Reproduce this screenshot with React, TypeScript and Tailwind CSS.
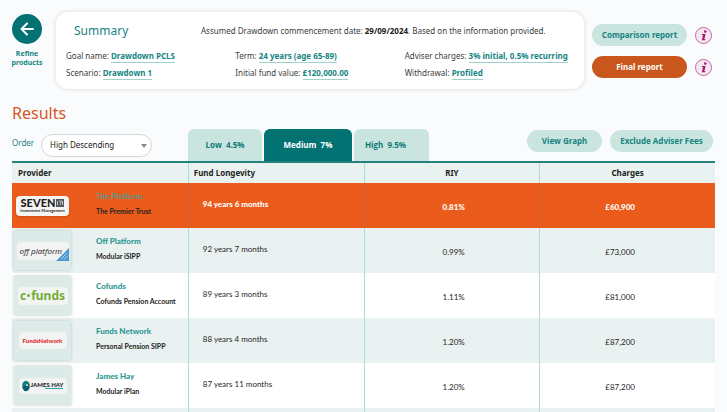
import React from "react";

type Row = {
  provider: string;
  product: string;
  longevity: string;
  riy: string;
  charges: string;
  logo: React.ReactNode;
};

function SevenLogo() {
  return (
    <div className="flex h-5 w-[53px] flex-col items-center justify-center rounded-sm bg-[#f6f4f3] shadow">
      <div className="flex items-center gap-px text-[11px] leading-[10px] font-black text-[#1f2222]">
        SEVEN
        <svg viewBox="0 0 8 8" className="size-2" aria-hidden="true">
          <rect width="8" height="8" fill="#55585a" />
          <path d="M1.5 2v4M3 2h2.500L4 6M6.500 2v4" stroke="#d7d9d9" strokeWidth=".8" fill="none" />
        </svg>
      </div>
      <div className="text-[4px] leading-[5px] font-bold whitespace-nowrap text-[#222]">Investment Management</div>
    </div>
  );
}

function OffPlatformLogo() {
  return (
    <div className="relative flex h-[18px] w-[52px] items-center rounded-sm bg-[#f2f3f3] pl-[3px] font-['Open_Sans',sans-serif] text-[8px] text-[#222] italic">
      <svg viewBox="0 0 13 13" className="absolute right-0 -bottom-px size-[13px]" aria-hidden="true">
        <path d="M13 0v13H0z" fill="#4d96d2" />
        <path d="M5 11l6-6M8 11.500l4-4" stroke="#b8d7f0" strokeWidth="1" />
      </svg>
      <span className="relative whitespace-nowrap">off platform</span>
    </div>
  );
}

function CofundsLogo() {
  return (
    <div className="flex h-[18px] w-[50px] items-center justify-center rounded-sm bg-[#f2f3f3] font-['Noto_Sans',sans-serif] text-[12px] leading-none font-bold text-[#76ab35]">
      c<span className="mx-px size-[3px] rounded-full bg-[#76ab35]" />funds
    </div>
  );
}

function FundsNetworkLogo() {
  return (
    <div className="flex h-[17px] w-12 items-center justify-center rounded-sm bg-[#f2f3f3] text-[6px] font-black text-[#e32a2a]">
      FundsNetwork
    </div>
  );
}

function JamesHayLogo() {
  return (
    <div className="flex h-4 w-12 items-center justify-center gap-px rounded-sm bg-[#f2f4f4]">
      <svg viewBox="0 0 8 12" className="h-3 w-2 shrink-0" aria-hidden="true">
        <ellipse cx="4" cy="6" rx="3.800" ry="5.200" fill="#147c85" />
        <path d="M1 8c3 0 4-3 6-4M2 10c3 0 4-2 5-3" stroke="#0c3f52" strokeWidth="1.200" fill="none" />
        <circle cx="5" cy="5" r="1" fill="#e0eeee" />
      </svg>
      <div className="flex flex-col items-end">
        <span className="text-[6px] leading-[6px] font-black whitespace-nowrap text-[#25292c]">JAMES HAY</span>
        <span className="h-px w-[18px] bg-[#2fa3a5]" />
      </div>
    </div>
  );
}

const rows: Row[] = [
  { provider: "7im Platform", product: "The Premier Trust", longevity: "94 years 6 months", riy: "0.81%", charges: "£60,900", logo: <SevenLogo /> },
  { provider: "Off Platform", product: "Modular iSIPP", longevity: "92 years 7 months", riy: "0.99%", charges: "£73,000", logo: <OffPlatformLogo /> },
  { provider: "Cofunds", product: "Cofunds Pension Account", longevity: "89 years 3 months", riy: "1.11%", charges: "£81,000", logo: <CofundsLogo /> },
  { provider: "Funds Network", product: "Personal Pension SIPP", longevity: "88 years 4 months", riy: "1.20%", charges: "£87,200", logo: <FundsNetworkLogo /> },
  { provider: "James Hay", product: "Modular iPlan", longevity: "87 years 11 months", riy: "1.20%", charges: "£87,200", logo: <JamesHayLogo /> },
];

function Fact({ label, value }: { label: string; value: string }) {
  return (
    <div className="whitespace-nowrap">
      {label}:{" "}
      <a href="#" className="border-b border-[#9ed0cc] pb-px font-bold text-[#168582]">
        {value}
      </a>
    </div>
  );
}

function InfoButton({ label }: { label: string }) {
  return (
    <button
      type="button"
      aria-label={label}
      className="flex size-[17px] items-center justify-center rounded-full border border-[#c266a3] bg-[#f5e6f0]"
    >
      <svg viewBox="0 0 9 13" className="h-[11px] w-2" aria-hidden="true">
        <circle cx="6" cy="1.900" r="1.500" fill="#a3167a" />
        <path d="M2.200 4.800h4.200L4.900 10.800h1.300L5.800 12H2l1.300-6H1.800z" fill="#a3167a" />
      </svg>
    </button>
  );
}

const pill = "h-[22px] rounded-full text-[8px] font-bold whitespace-nowrap";
const divider = "border-l border-solid border-l-[#b0dad7]";
const dividerActive = "border-l border-solid border-l-[#c9653a]";

export default function App() {
  return (
    <div className="h-screen overflow-hidden bg-[#fafbfc] px-3 pt-3 font-['Noto_Sans','Open_Sans',sans-serif] text-[#3a3d40]">
      <header className="flex pr-[3px]">
        <button type="button" className="mt-0.5 flex w-[30px] shrink-0 flex-col items-center text-[7px] leading-[9px] font-bold text-[#168582]">
          <span className="flex size-[30px] shrink-0 items-center justify-center rounded-full bg-[#037272]">
            <svg viewBox="0 0 14 14" className="size-3.5" fill="none" stroke="white" strokeWidth="2" strokeLinecap="round" strokeLinejoin="round" aria-hidden="true">
              <path d="M13 7H1.500M7 1.500L1.500 7 7 12.500" />
            </svg>
          </span>
          <span className="mt-[5px]">Refine products</span>
        </button>

        <section className="ml-3.5 h-[77px] min-w-0 flex-1 rounded-xl bg-white px-2.5 pt-2.5 text-[8px] leading-[17px] shadow-[0_0_4px_#d5d9dc]">
          <div className="flex items-center">
            <h2 className="w-[135px] shrink-0 pl-2 text-[12px] text-[#168582]">Summary</h2>
            <p className="whitespace-nowrap">
              Assumed Drawdown commencement date: <b className="text-[#222]">29/09/2024</b>. Based on the information provided.
            </p>
          </div>
          <div className="mt-2 grid grid-cols-3">
            <Fact label="Goal name" value="Drawdown PCLS" />
            <Fact label="Term" value="24 years (age 65-89)" />
            <Fact label="Adviser charges" value="3% initial, 0.5% recurring" />
            <Fact label="Scenario" value="Drawdown 1" />
            <Fact label="Initial fund value" value="£120,000.00" />
            <Fact label="Withdrawal" value="Profiled" />
          </div>
        </section>

        <div className="mt-3 ml-2 flex shrink-0 flex-col gap-2.5">
          <div className="flex items-center gap-2">
            <button type="button" className={`${pill} w-[95px] bg-[#cae4df] text-[#168582]`}>Comparison report</button>
            <InfoButton label="About the comparison report" />
          </div>
          <div className="flex items-center gap-2">
            <button type="button" className={`${pill} w-[95px] bg-[#c9571d] text-white`}>Final report</button>
            <InfoButton label="About the final report" />
          </div>
        </div>
      </header>

      <h1 className="mt-3 text-[16px] leading-6 text-[#d4581f]">Results</h1>

      <div className="mt-1 flex items-start">
        <div className="flex h-8 w-44 shrink-0 items-center">
          <label htmlFor="order" className="w-[29px] shrink-0 pb-1 text-[8px] text-[#168582]">Order</label>
          <div className="relative flex">
            <select id="order" className="h-[23px] w-[111px] appearance-none rounded-full border border-[#d3d6d8] bg-white pl-2 text-[8px] text-[#222]">
              <option>High Descending</option>
              <option>Low Ascending</option>
            </select>
            <svg viewBox="0 0 6 4" className="pointer-events-none absolute top-[10px] right-[5px] h-1 w-1.5" aria-hidden="true">
              <path d="M0 0h6L3 4z" fill="#888" />
            </svg>
          </div>
        </div>
        <div className="flex gap-0.5 font-['Open_Sans',sans-serif] text-[8px] font-bold whitespace-pre" role="tablist">
          <button type="button" role="tab" aria-selected="false" className="h-8 w-[74px] rounded-t-md bg-[#cae4df] text-[#0d7a78]">{"Low  4.5%"}</button>
          <button type="button" role="tab" aria-selected="true" className="h-8 w-[88px] rounded-t-md bg-[#037272] text-white">{"Medium  7%"}</button>
          <button type="button" role="tab" aria-selected="false" className="h-8 w-[75px] rounded-t-md bg-[#cae4df] pr-3 text-[#0d7a78]">{"High  9.5%"}</button>
        </div>
        <div className="ml-auto flex gap-2 pt-px pr-0.5">
          <button type="button" className={`${pill} w-[75px] bg-[#cae4df] text-[#168582]`}>View Graph</button>
          <button type="button" className={`${pill} w-[103px] bg-[#cae4df] text-[#168582]`}>Exclude Adviser Fees</button>
        </div>
      </div>

      <table className="w-full table-fixed border-separate border-spacing-0 border-t-2 border-[#26827f] text-[8px]">
        <thead>
          <tr className="h-5 bg-[#eaf1f1] text-[#1c1e20]">
            <th className="p-0 pl-1.5 text-left">Provider</th>
            <th className={`${divider} p-0 pl-[5px] text-left`}>Fund Longevity</th>
            <th className={`${divider} p-0`}>RIY</th>
            <th className={`${divider} p-0`}>Charges</th>
          </tr>
        </thead>
        <tbody className="font-['Lato',sans-serif] text-[#1f1f1f]">
          {rows.map((row, i) => (
            <tr
              key={row.provider}
              className={`h-[45px] ${i === 0 ? "bg-[#eb5c1c] font-black text-white" : i % 2 ? "bg-[#eaf1f1]" : "bg-white"}`}
            >
              <td className="p-0">
                <div className="flex items-center pl-0.5">
                  <div className={`flex h-[39px] w-[57px] shrink-0 items-center justify-center ${i === 0 ? "" : "bg-[#dceae8] shadow-[0_0_3px_#b9c4c4]"}`}>
                    {row.logo}
                  </div>
                  <div className="pb-[3px] pl-[25px] whitespace-nowrap">
                    <a href="#" className={`block leading-[15px] font-black ${i === 0 ? "text-[#5f9688]" : "text-[#2a9793]"}`}>{row.provider}</a>
                    <div className="text-[7px] leading-[15px] font-bold text-[#222]">{row.product}</div>
                  </div>
                </div>
              </td>
              <td className={`p-0 pb-[3px] pl-[14px] ${i === 0 ? dividerActive : divider}`}>{row.longevity}</td>
              <td className={`p-0 pt-0.5 pl-[78px] ${i === 0 ? dividerActive : divider}`}>{row.riy}</td>
              <td className={`p-0 pt-0.5 pl-[65px] ${i === 0 ? dividerActive : divider}`}>{row.charges}</td>
            </tr>
          ))}
          <tr className="h-[45px] bg-[#eaf1f1]">
            <td className="p-0" />
            <td className={`${divider} p-0`} />
            <td className={`${divider} p-0`} />
            <td className={`${divider} p-0`} />
          </tr>
        </tbody>
      </table>
    </div>
  );
}
